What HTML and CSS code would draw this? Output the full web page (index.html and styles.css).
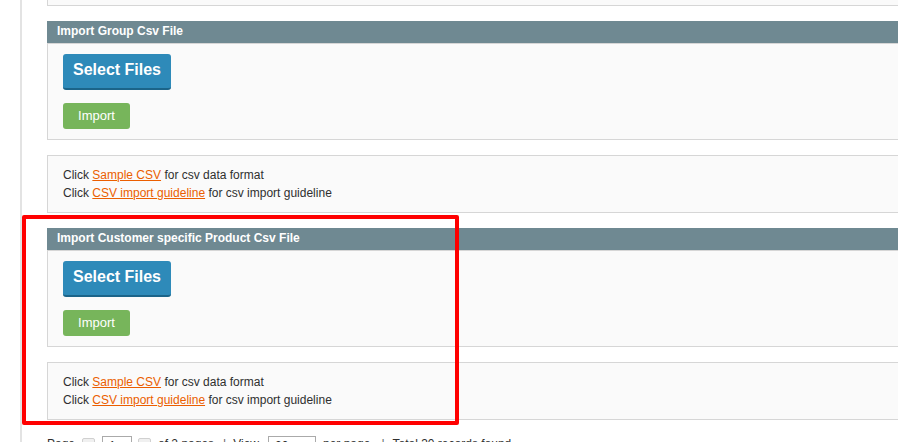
FILE: index.html
```html
<!DOCTYPE html>
<html>
<head>
<meta charset="utf-8">
<link rel="stylesheet" href="styles.css">
</head>
<body>
<div class="page">
  <div class="content">
    <div class="panel-top"></div>

    <div class="section">
      <div class="head"><h4>Import Group Csv File</h4></div>
      <div class="fieldset">
        <button class="btn-select">Select Files</button>
        <button class="btn-import">Import</button>
      </div>
    </div>

    <div class="notes">
      <p>Click <a href="#">Sample CSV</a> for csv data format</p>
      <p>Click <a href="#">CSV import guideline</a> for csv import guideline</p>
    </div>

    <div class="section">
      <div class="head"><h4>Import Customer specific Product Csv File</h4></div>
      <div class="fieldset">
        <button class="btn-select">Select Files</button>
        <button class="btn-import">Import</button>
      </div>
    </div>

    <div class="notes">
      <p>Click <a href="#">Sample CSV</a> for csv data format</p>
      <p>Click <a href="#">CSV import guideline</a> for csv import guideline</p>
    </div>

    <div class="pager">
      <span class="lbl">Page</span>
      <span class="pbtn pbtn-1"></span>
      <span class="pinput pinput-page">1</span>
      <span class="pbtn pbtn-2"></span>
      <span class="lbl of">of 2 pages</span>
      <span class="sep sep-1">|</span>
      <span class="lbl view">View</span>
      <span class="pinput pinput-view">20</span>
      <span class="lbl per">per page</span>
      <span class="sep sep-2">|</span>
      <span class="lbl total">Total 30 records found</span>
    </div>
  </div>
  <div class="highlight"></div>
</div>
</body>
</html>
```

FILE: styles.css
```css
html, body {
  margin: 0;
  padding: 0;
  background: #ffffff;
  overflow: hidden;
}
body {
  font-family: "Liberation Sans", Arial, sans-serif;
  font-size: 12px;
  color: #2f2f2f;
  width: 898px;
  height: 442px;
}
.page {
  position: relative;
  margin-left: 20px;
  border-left: 2px solid #e3e3e3;
  height: 442px;
  padding-left: 25px;
}
.content {
  width: 870px;
}
.panel-top {
  height: 6px;
  box-sizing: border-box;
  background: #fafafa;
  border-left: 1px solid #d6d6d6;
  border-bottom: 1px solid #d6d6d6;
}
.section {
  margin-top: 15px;
}
.head {
  background: #6f8992;
  height: 22px;
  padding: 0 10px;
}
.head h4 {
  margin: 0;
  color: #ffffff;
  font-size: 12px;
  font-weight: bold;
  line-height: 21px;
}
.fieldset {
  background: #fafafa;
  border: 1px solid #d6d6d6;
  padding: 10px 15px;
  display: flex;
  flex-direction: column;
  align-items: flex-start;
}
button {
  font-family: "Liberation Sans", Arial, sans-serif;
  border: none;
  margin: 0;
  cursor: pointer;
}
.btn-select {
  background: #2e8ab9;
  color: #ffffff;
  font-size: 16px;
  font-weight: bold;
  height: 36px;
  width: 108px;
  padding: 0 0 3px;
  line-height: 31px;
  border-bottom: 2px solid #1b6489;
  border-radius: 3px;
  box-sizing: border-box;
}
.btn-import {
  margin-top: 13px;
  background: #77b55b;
  color: #ffffff;
  font-size: 13px;
  height: 26px;
  width: 67px;
  padding: 0;
  line-height: 26px;
  border-radius: 3px;
}
.notes {
  margin-top: 15px;
  background: #fafafa;
  border: 1px solid #d6d6d6;
  padding: 10px 15px;
}
.notes p {
  margin: 0;
  line-height: 18px;
}
.notes a {
  color: #eb5e00;
  text-decoration: underline;
}
.pager {
  margin-top: 16px;
  display: flex;
  align-items: flex-start;
  height: 24px;
  line-height: 16px;
}
.lbl, .sep {
  display: block;
  padding-top: 0;
}
.pbtn {
  display: block;
  width: 11px;
  height: 16px;
  margin-top: 2px;
  background: #f0f0f0;
  border: 1px solid #d0d0d0;
  border-radius: 2px;
}
.pbtn-1 { margin-left: 7px; }
.pbtn-2 { margin-left: 6px; }
.pinput {
  display: block;
  height: 20px;
  box-sizing: border-box;
  border: 1px solid #aaaaaa;
  padding: 1px 0 0 6px;
  line-height: 16px;
}
.pinput-page { width: 30px; margin-left: 7px; }
.pinput-view { width: 48px; margin-left: 9px; }
.of { margin-left: 7px; }
.sep { color: #666; }
.sep-1 { margin: 0 7px 0 9px; }
.sep-2 { margin: 0 8px 0 11px; }
.per { margin-left: 7px; }
.highlight {
  position: absolute;
  left: 0;
  top: 215px;
  width: 437px;
  height: 210px;
  box-sizing: border-box;
  border: 4px solid #ff0000;
  border-radius: 2px;
  pointer-events: none;
}
```
